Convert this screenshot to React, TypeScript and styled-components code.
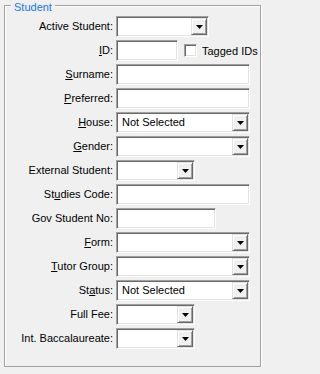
import React from 'react';
import styled, { createGlobalStyle } from 'styled-components';

const GlobalStyle = createGlobalStyle`
  html, body {
    margin: 0;
    padding: 0;
    background: #f0f0f0;
  }
  body {
    font-family: 'Liberation Sans', Arial, sans-serif;
    font-size: 11px;
    color: #000;
  }
`;

type Field =
  | { label: React.ReactNode; kind: 'combo'; width: number; value?: string }
  | { label: React.ReactNode; kind: 'text'; width: number }
  | { label: React.ReactNode; kind: 'id'; width: number };

const Key: React.FC<{ before?: string; k: string; after?: string }> = ({ before, k, after }) => (
  <>
    {before}
    <u>{k}</u>
    {after}:
  </>
);

const fields: Field[] = [
  { label: 'Active Student:', kind: 'combo', width: 93 },
  { label: <Key k="I" after="D" />, kind: 'id', width: 62 },
  { label: <Key k="S" after="urname" />, kind: 'text', width: 134 },
  { label: <Key k="P" after="referred" />, kind: 'text', width: 134 },
  { label: <Key k="H" after="ouse" />, kind: 'combo', width: 134, value: 'Not Selected' },
  { label: <Key k="G" after="ender" />, kind: 'combo', width: 134 },
  { label: 'External Student:', kind: 'combo', width: 79 },
  { label: <Key before="St" k="u" after="dies Code" />, kind: 'text', width: 134 },
  { label: 'Gov Student No:', kind: 'text', width: 100 },
  { label: <Key k="F" after="orm" />, kind: 'combo', width: 134 },
  { label: <Key k="T" after="utor Group" />, kind: 'combo', width: 134 },
  { label: <Key before="St" k="a" after="tus" />, kind: 'combo', width: 134, value: 'Not Selected' },
  { label: 'Full Fee:', kind: 'combo', width: 79 },
  { label: 'Int. Baccalaureate:', kind: 'combo', width: 79 },
];

const App: React.FC = () => (
  <>
    <GlobalStyle />
    <GroupBox>
      <Legend>Student</Legend>
      <FormGrid>
        {fields.map((f, i) => (
          <React.Fragment key={i}>
            <Label>{f.label}</Label>
            {f.kind === 'combo' && (
              <Combo width={f.width}>
                <ComboText>{f.value}</ComboText>
                <DropButton>
                  <svg width="7" height="4" viewBox="0 0 7 4">
                    <polygon points="0,0 7,0 3.5,4" fill="#000" />
                  </svg>
                </DropButton>
              </Combo>
            )}
            {f.kind === 'text' && <TextBox width={f.width} />}
            {f.kind === 'id' && (
              <InlineRow>
                <TextBox width={f.width} />
                <CheckLabel>
                  <CheckBox />
                  Tagged IDs
                </CheckLabel>
              </InlineRow>
            )}
          </React.Fragment>
        ))}
      </FormGrid>
    </GroupBox>
  </>
);

const GroupBox = styled.div`
  position: relative;
  box-sizing: border-box;
  width: 257px;
  margin: 5px 0 0 4px;
  padding: 10px 0 17px 0;
  border: 1px solid #a0a0a0;
  box-shadow: inset 1px 1px #fff, 1px 1px #fff;
`;

const Legend = styled.span`
  position: absolute;
  top: -5px;
  left: 6px;
  padding: 0 3px 0 3px;
  background: #f0f0f0;
  color: #1a76e0;
  font-size: 11px;
  line-height: 13px;
`;

const FormGrid = styled.div`
  display: grid;
  grid-template-columns: 108px auto;
  column-gap: 3px;
  row-gap: 3px;
  align-items: center;
  justify-items: start;
`;

const Label = styled.label`
  justify-self: end;
  white-space: nowrap;
  line-height: 13px;

  u {
    text-decoration-thickness: 1px;
    text-underline-offset: 1px;
  }
`;

const sunken = `
  box-sizing: border-box;
  height: 21px;
  background: #fff;
  border: 1px solid;
  border-color: #a0a0a0 #fff #fff #a0a0a0;
  box-shadow: inset 1px 1px #696969, inset -1px -1px #e3e3e3;
`;

const TextBox = styled.div<{ width: number }>`
  ${sunken}
  width: ${p => p.width}px;
`;

const Combo = styled.div<{ width: number }>`
  ${sunken}
  width: ${p => p.width}px;
  display: flex;
  align-items: stretch;
  padding: 1px;
`;

const ComboText = styled.span`
  flex: 1;
  padding-left: 4px;
  line-height: 17px;
  white-space: nowrap;
  overflow: hidden;
`;

const DropButton = styled.span`
  box-sizing: border-box;
  width: 16px;
  display: flex;
  align-items: center;
  justify-content: center;
  background: #f0f0f0;
  border: 1px solid;
  border-color: #e3e3e3 #696969 #696969 #e3e3e3;
  box-shadow: inset 1px 1px #fff, inset -1px -1px #a0a0a0;

  svg {
    display: block;
    margin-top: 1px;
  }
`;

const InlineRow = styled.div`
  display: flex;
  align-items: center;
`;

const CheckLabel = styled.span`
  display: flex;
  align-items: center;
  gap: 5px;
  margin-left: 6px;
  white-space: nowrap;
`;

const CheckBox = styled.span`
  box-sizing: border-box;
  width: 13px;
  height: 13px;
  background: #fff;
  border: 1px solid;
  border-color: #a0a0a0 #fff #fff #a0a0a0;
  box-shadow: inset 1px 1px #696969, inset -1px -1px #e3e3e3;
`;

export default App;
